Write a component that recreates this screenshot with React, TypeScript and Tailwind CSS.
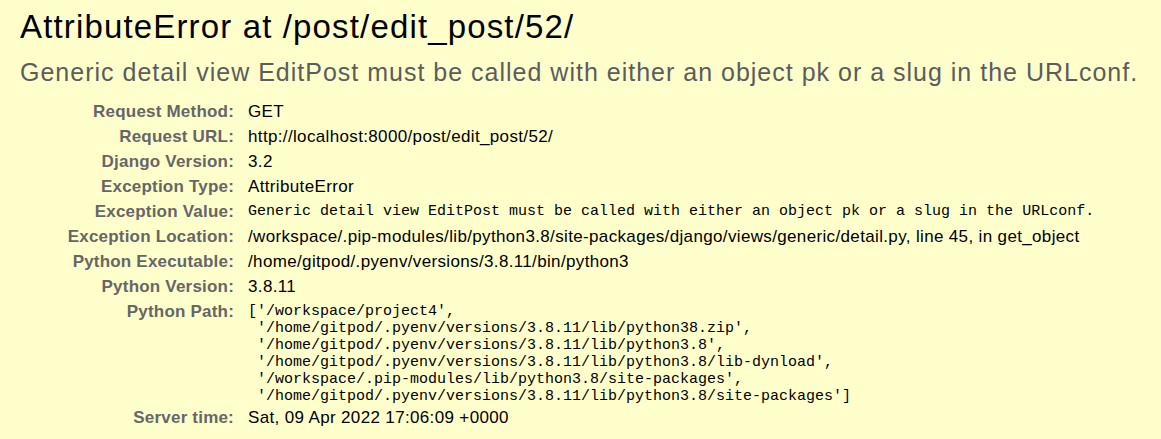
import React from 'react';

const rows: { label: string; value: React.ReactNode; mono?: boolean }[] = [
  { label: 'Request Method:', value: 'GET' },
  { label: 'Request URL:', value: 'http://localhost:8000/post/edit_post/52/' },
  { label: 'Django Version:', value: '3.2' },
  { label: 'Exception Type:', value: 'AttributeError' },
  {
    label: 'Exception Value:',
    value: 'Generic detail view EditPost must be called with either an object pk or a slug in the URLconf.',
    mono: true,
  },
  {
    label: 'Exception Location:',
    value: '/workspace/.pip-modules/lib/python3.8/site-packages/django/views/generic/detail.py, line 45, in get_object',
  },
  { label: 'Python Executable:', value: '/home/gitpod/.pyenv/versions/3.8.11/bin/python3' },
  { label: 'Python Version:', value: '3.8.11' },
];

const pythonPath = [
  "['/workspace/project4',",
  " '/home/gitpod/.pyenv/versions/3.8.11/lib/python38.zip',",
  " '/home/gitpod/.pyenv/versions/3.8.11/lib/python3.8',",
  " '/home/gitpod/.pyenv/versions/3.8.11/lib/python3.8/lib-dynload',",
  " '/workspace/.pip-modules/lib/python3.8/site-packages',",
  " '/home/gitpod/.pyenv/versions/3.8.11/lib/python3.8/site-packages']",
];

const sans = "font-['Liberation_Sans',Arial,sans-serif]";
const mono = "font-['Liberation_Mono','Courier_New',monospace]";

function Label({ children }: { children: React.ReactNode }) {
  return (
    <div className="pr-[14px] text-right text-[17px] font-bold tracking-[0.2px] leading-[25px] text-[#666666] whitespace-nowrap">
      {children}
    </div>
  );
}

function Value({ children }: { children: React.ReactNode }) {
  return <div className="text-[17px] tracking-[0.35px] leading-[25px] whitespace-nowrap">{children}</div>;
}

export default function App() {
  return (
    <div className={`min-h-screen h-[439px] overflow-hidden bg-[#ffffcc] px-5 pt-[8px] text-black ${sans}`}>
      {/* Summary header */}
      <h1 className="text-[33px] tracking-[1.15px] leading-[37px] font-normal whitespace-nowrap">
        AttributeError at /post/edit_post/52/
      </h1>
      <h2 className="mt-[15px] text-[25px] tracking-[1px] leading-[25px] font-normal text-[#5c5c5c] whitespace-nowrap">
        Generic detail view EditPost must be called with either an object pk or a slug in the URLconf.
      </h2>

      {/* Meta table */}
      <div className="mt-[14px] grid grid-cols-[228px_1fr]">
        {rows.map((r) => (
          <React.Fragment key={r.label}>
            <Label>{r.label}</Label>
            {r.mono ? (
              <div className={`${mono} text-[15px] leading-[25px] whitespace-pre`}>{r.value}</div>
            ) : (
              <Value>{r.value}</Value>
            )}
          </React.Fragment>
        ))}

        <Label>Python Path:</Label>
        <div className={`${mono} pt-[4px] text-[15px] leading-[17px] whitespace-pre`}>
          {pythonPath.map((line) => (
            <div key={line}>{line}</div>
          ))}
        </div>

        <Label>Server time:</Label>
        <Value>Sat, 09 Apr 2022 17:06:09 +0000</Value>
      </div>
    </div>
  );
}
